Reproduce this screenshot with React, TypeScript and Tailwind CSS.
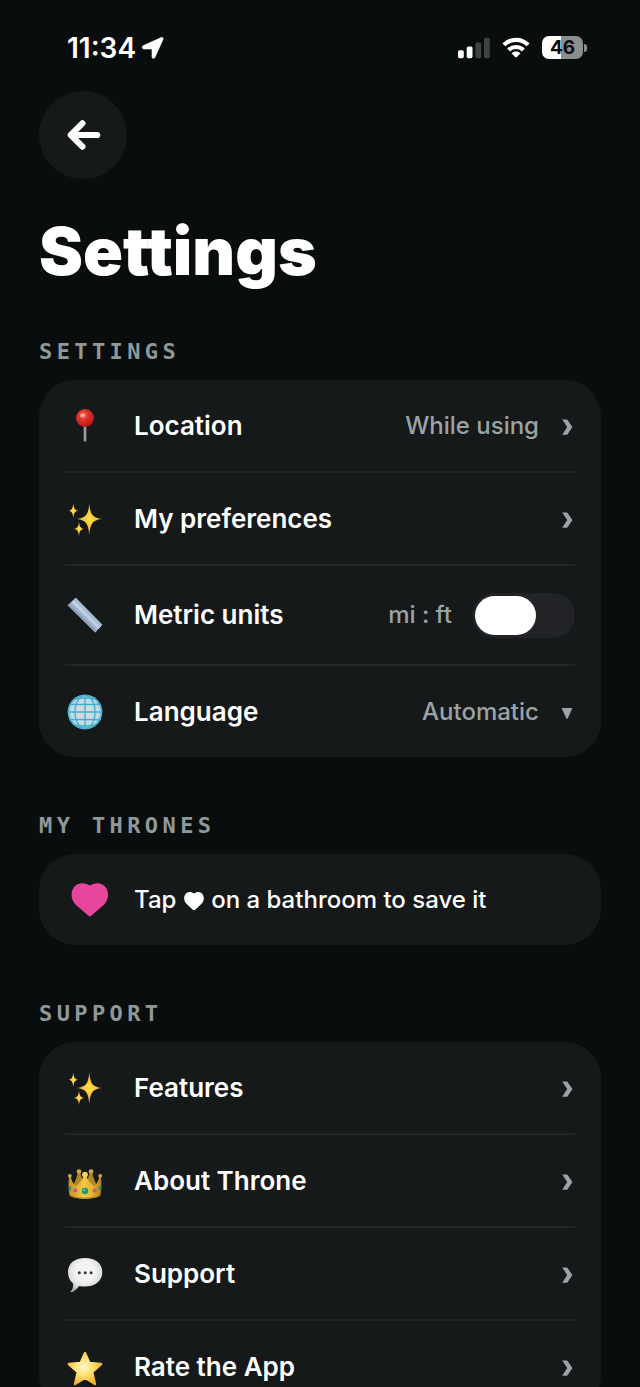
import { useState } from "react";
import type { ReactNode } from "react";

const PinIcon = () => (
  <svg viewBox="0 0 40 40" className="size-10 shrink-0" aria-hidden="true">
    <defs>
      <radialGradient id="pin-head" cx="0.4" cy="0.35" r="0.65">
        <stop offset="0" stopColor="#f58a80" />
        <stop offset="0.35" stopColor="#e2382f" />
        <stop offset="1" stopColor="#b9151b" />
      </radialGradient>
      <linearGradient id="pin-stick" x1="0" x2="1" y1="0" y2="0">
        <stop offset="0" stopColor="#6d6a6b" />
        <stop offset="0.5" stopColor="#bdb6b6" />
        <stop offset="1" stopColor="#6d6a6b" />
      </linearGradient>
    </defs>
    <rect x="18.5" y="18" width="3" height="17.5" rx="1.2" fill="url(#pin-stick)" />
    <circle cx="20" cy="12" r="9" fill="url(#pin-head)" />
    <ellipse cx="17.5" cy="9.5" rx="2.6" ry="2" fill="#fff" opacity="0.35" />
  </svg>
);

const SparklesIcon = () => (
  <svg viewBox="0 0 40 40" className="size-10 shrink-0" aria-hidden="true">
    <defs>
      <radialGradient id="sparkle">
        <stop offset="0" stopColor="#ffe04d" />
        <stop offset="0.5" stopColor="#fbc637" />
        <stop offset="1" stopColor="#d9952a" />
      </radialGradient>
    </defs>
    <g fill="url(#sparkle)">
      <path d="M24.3 4.2C25.4 15.6 27.2 18.6 36.8 20C27.2 21.4 25.4 24.4 24.3 35.8C23.2 24.4 21.4 21.4 11.8 20C21.4 18.6 23.2 15.6 24.3 4.2Z" />
      <path d="M8.3 4.3C8.9 9.6 9.6 11 13.3 11.8C9.6 12.6 8.9 14 8.3 19.3C7.7 14 7 12.6 3.3 11.8C7 11 7.7 9.6 8.3 4.3Z" />
      <path d="M14 22.6C14.6 27.8 15.3 29.2 19 30C15.3 30.8 14.6 32.2 14 37.2C13.4 32.2 12.7 30.8 9 30C12.7 29.2 13.4 27.8 14 22.6Z" />
    </g>
  </svg>
);

const RulerIcon = () => (
  <svg viewBox="0 0 40 40" className="size-10 shrink-0" aria-hidden="true">
    <path d="M10.7 2.8L37.3 29.8L30.3 37.5L2.7 10.2Z" fill="#9fb3cc" />
    <path d="M10.7 2.8L37.3 29.8L35.2 32.1L8.4 5.2Z" fill="#a9bcd6" />
    <path d="M8.4 5.2L35.2 32.1L33.4 34.1L6.4 7.1Z" fill="#c3d3e6" />
    <path d="M4.4 8.5L31.9 35.8L30.3 37.5L2.7 10.2Z" fill="#8fa2ba" />
  </svg>
);

const GlobeIcon = () => (
  <svg viewBox="0 0 40 40" className="size-10 shrink-0" aria-hidden="true">
    <defs>
      <radialGradient id="globe">
        <stop offset="0.3" stopColor="#d3dbe2" />
        <stop offset="0.8" stopColor="#c2dce6" />
        <stop offset="1" stopColor="#7cc8dc" />
      </radialGradient>
    </defs>
    <circle cx="20" cy="20" r="17.2" fill="url(#globe)" />
    <g fill="none" stroke="#46b0cc" strokeWidth="1.4">
      <circle cx="20" cy="20" r="16.6" />
      <path d="M20 3.5V36.5M3.5 20H36.5" />
      <ellipse cx="20" cy="20" rx="10" ry="16.5" />
      <path d="M4.6 12.2Q20 12.8 35.4 12.2M4.6 27.8Q20 27.2 35.4 27.8M9.5 7.3Q20 4.8 30.5 7.3M9.5 32.7Q20 35.2 30.5 32.7" />
    </g>
  </svg>
);

const HeartIcon = () => (
  <svg viewBox="0 0 44 40" className="h-10 w-11 shrink-0" aria-hidden="true">
    <path
      d="M24.8 36.4C24.2 36.4 23.4 35.8 22.6 35L10.4 24.4C7.8 21.6 6.6 18.4 6.6 14.8C6.6 8.2 11 3.2 17.2 3.2C20.4 3.2 22.8 4.4 24.8 5.6C26.8 4.4 29.2 3.2 32.4 3.2C38.6 3.2 43 8.2 43 14.8C43 18.4 41.8 21.6 39.2 24.4L27 35C26.2 35.8 25.4 36.4 24.8 36.4Z"
      fill="#e6479c"
    />
  </svg>
);

const CrownIcon = () => (
  <svg viewBox="0 0 40 40" className="size-10 shrink-0" aria-hidden="true">
    <defs>
      <linearGradient id="crown" x1="0" x2="1" y1="0" y2="0">
        <stop offset="0" stopColor="#c3901f" />
        <stop offset="0.45" stopColor="#f2cb45" />
        <stop offset="0.7" stopColor="#e5b636" />
        <stop offset="1" stopColor="#b27f1a" />
      </linearGradient>
    </defs>
    <path d="M7 27C9 22 12 17 13 11H15C16 15 18 19 20 22C22 19 24 15 25 11H27C28 17 31 22 33 27Z" fill="#b3862a" />
    <circle cx="14" cy="10.6" r="2.4" fill="#cfa53c" />
    <circle cx="26" cy="10.6" r="2.4" fill="#cfa53c" />
    <path
      d="M4.2 15.6H5.6C6.6 20 8.6 23.6 10.6 25C14.4 23 17.6 18.6 19 14H21C22.4 18.6 25.6 23 29.4 25C31.4 23.6 33.4 20 34.4 15.6H35.8C36.8 22 36.6 29 35.4 34.4C30 38.8 10 38.8 4.6 34.4C3.4 29 3.2 22 4.2 15.6Z"
      fill="url(#crown)"
    />
    <circle cx="20" cy="13.6" r="2.9" fill="#f4d45a" />
    <circle cx="4.8" cy="14.8" r="1.9" fill="#d9ab3a" />
    <circle cx="35.2" cy="14.8" r="1.9" fill="#d9ab3a" />
    <path d="M5.4 34.4C12 38 28 38 34.6 34.4" fill="none" stroke="#b58520" strokeWidth="1" />
    <circle cx="20" cy="30" r="3.2" fill="#189a72" />
    <circle cx="19.2" cy="29" r="1" fill="#6fd3b0" />
    <circle cx="10.3" cy="29.4" r="2" fill="#dd4f93" />
    <circle cx="29.7" cy="29.4" r="2" fill="#dd4f93" />
    <ellipse cx="4.9" cy="27.4" rx="1.3" ry="2.3" fill="#189a72" />
    <ellipse cx="35.1" cy="27.4" rx="1.3" ry="2.3" fill="#189a72" />
  </svg>
);

const BubbleIcon = () => (
  <svg viewBox="0 0 40 40" className="size-10 shrink-0" aria-hidden="true">
    <defs>
      <radialGradient id="bubble" cx="0.5" cy="0.4" r="0.62">
        <stop offset="0.45" stopColor="#f3f3f4" />
        <stop offset="0.8" stopColor="#dadbdc" />
        <stop offset="1" stopColor="#a9abad" />
      </radialGradient>
    </defs>
    <path
      d="M20 4C30.5 4 37.3 9.5 37.3 18.1C37.3 26.9 30.5 32.5 20 32.5C17.8 32.5 15.8 32.3 14 31.9C12.2 34.9 9 37.5 6.2 38.2C5.6 38.3 5.4 37.7 5.8 37.3C7.4 35.5 8.4 32.7 8.2 29.7C4.8 27.1 3 22.9 3 18.1C3 9.5 9.5 4 20 4Z"
      fill="url(#bubble)"
    />
    <g fill="#333537">
      <circle cx="14.3" cy="18.8" r="1.5" />
      <circle cx="20.2" cy="18.8" r="1.5" />
      <circle cx="26.1" cy="18.8" r="1.5" />
    </g>
  </svg>
);

const StarIcon = () => (
  <svg viewBox="0 0 40 40" className="size-10 shrink-0" aria-hidden="true">
    <defs>
      <radialGradient id="star" cx="0.45" cy="0.45" r="0.6">
        <stop offset="0" stopColor="#fff6cf" />
        <stop offset="0.5" stopColor="#fddf6d" />
        <stop offset="1" stopColor="#f4a92a" />
      </radialGradient>
    </defs>
    <path
      d="M20 6L24.4 16L36.2 17L27.2 25L30 37L20 30.8L10 37L12.8 25L3.8 17L15.6 16Z"
      fill="url(#star)"
      stroke="url(#star)"
      strokeWidth="2.4"
      strokeLinejoin="round"
    />
  </svg>
);

const Chevron = () => (
  <svg viewBox="0 0 16 24" className="h-6 w-4 shrink-0" aria-hidden="true">
    <path d="M3.2 5.4H7.6Q8.2 5.4 8.6 6L13.4 13.1L8.6 20.2Q8.2 20.8 7.6 20.8H3.2L8.2 13.1Z" fill="#9ba4a5" />
  </svg>
);

const StatusBar = () => (
  <header className="flex h-[91px] items-center justify-between pt-1 pl-7 pr-[14px]">
    <div className="flex items-center gap-1">
      <span className="text-[28px] leading-8 font-semibold">11:34</span>
      <svg viewBox="0 0 24 24" className="size-6" aria-hidden="true">
        <path
          d="M21.2 1.6C22.6 1 23.6 2 23 3.4L15 21.2C14.2 23 12 22.6 12 20.8V13.6C12 13.2 11.8 13 11.4 13H4C2 12.8 1.6 10.4 3.4 9.6Z"
          fill="#fff"
          stroke="#fff"
          strokeWidth="0.6"
        />
      </svg>
    </div>
    <div className="flex items-center gap-3">
      <svg viewBox="0 0 32 24" className="h-6 w-8" aria-hidden="true">
        <rect x="0" y="14.2" width="5.8" height="8" rx="1.6" fill="#fff" />
        <rect x="8.7" y="10.5" width="5.8" height="11.7" rx="1.6" fill="#fff" />
        <rect x="17.4" y="6.5" width="5.8" height="15.7" rx="1.6" fill="#404344" />
        <rect x="26" y="1.7" width="5.8" height="20.5" rx="1.6" fill="#404344" />
      </svg>
      <svg viewBox="0 0 28 24" className="h-6 w-7" aria-hidden="true">
        <g fill="none" stroke="#fff" strokeWidth="4.2">
          <path d="M1.9 8.9C8.6 2.1 19.4 2.1 26.1 8.9" />
          <path d="M6.6 14C10.7 10 17.3 10 21.4 14" />
        </g>
        <path d="M9.5 17.2C12 14.9 16 14.9 18.5 17.2L14.9 20.9Q14 21.8 13.1 20.9Z" fill="#fff" />
      </svg>
      <div className="flex items-center gap-px">
        <div className="flex h-[23px] w-[41px] items-center justify-center rounded-[7px] bg-linear-to-r from-white from-46% to-[#8b8d8e] to-46% text-[19px] leading-none font-bold text-[#090d0e]">
          46
        </div>
        <div className="h-2 w-[3px] rounded-r-full bg-[#8b8d8e]" />
      </div>
    </div>
  </header>
);

const Section = ({ title, children }: { title: string; children: ReactNode }) => (
  <section>
    <h2 className="mb-[14px] font-['DejaVu_Sans_Mono',monospace] text-[22px] leading-7 font-bold tracking-[0.2em] text-[#8f999a] uppercase">
      {title}
    </h2>
    <div className="divide-y-2 divide-[#222627] rounded-[36px] bg-[#15191a] px-[26px]">
      {children}
    </div>
  </section>
);

interface RowLinkProps {
  icon: ReactNode;
  label: string;
  value?: string;
}

const RowLink = ({ icon, label, value }: RowLinkProps) => (
  <a href="#" className="box-content flex h-[91px] items-center gap-[29px]">
    {icon}
    <span className="flex-1 text-[26px] leading-8 font-semibold">{label}</span>
    <span className="flex items-center gap-5">
      {value && (
        <span className="text-2xl leading-8 font-medium text-[#9ba4a5]">{value}</span>
      )}
      <Chevron />
    </span>
  </a>
);

export default function App() {
  const [metric, setMetric] = useState(false);

  return (
    <div className="h-screen overflow-hidden bg-[#090d0e] px-[39px] font-[Inter,sans-serif] text-white">
      <StatusBar />
      <main>
        <button
          type="button"
          aria-label="Back"
          className="block size-[88px] rounded-full bg-[#15191a]"
        >
          <svg viewBox="0 0 88 88" aria-hidden="true">
            <path
              d="M43.4 32.4L31.8 44L43.4 55.6M32.5 44H58.2"
              fill="none"
              stroke="#fff"
              strokeWidth="6.2"
              strokeLinecap="round"
              strokeLinejoin="round"
            />
          </svg>
        </button>
        <h1 className="mt-9 mb-[51px] text-[66px] leading-[72px] font-black">Settings</h1>

        <div className="flex flex-col gap-[55px]">
          <Section title="Settings">
            <RowLink icon={<PinIcon />} label="Location" value="While using" />
            <RowLink icon={<SparklesIcon />} label="My preferences" />
            <div className="box-content flex h-[98px] items-center gap-[29px]">
              <RulerIcon />
              <label htmlFor="metric" className="flex-1 text-[26px] leading-8 font-semibold">
                Metric units
              </label>
              <span className="flex items-center gap-5">
                <span className="text-2xl leading-8 font-medium text-[#9ba4a5]">mi : ft</span>
                <input
                  id="metric"
                  type="checkbox"
                  role="switch"
                  checked={metric}
                  onChange={(e) => setMetric(e.target.checked)}
                  className="flex h-[45px] w-[103px] appearance-none items-center rounded-full bg-[#222327] px-[3px] before:h-[39px] before:w-[61px] before:rounded-full before:bg-white before:transition-transform checked:bg-green-500 checked:before:translate-x-9"
                />
              </span>
            </div>
            <div className="box-content flex h-[91px] items-center gap-[29px]">
              <GlobeIcon />
              <label htmlFor="language" className="flex-1 text-[26px] leading-8 font-semibold">
                Language
              </label>
              <span className="flex items-center gap-5">
                <select
                  id="language"
                  className="h-8 appearance-none bg-transparent text-2xl leading-8 font-medium text-[#9ba4a5]"
                >
                  <option>Automatic</option>
                </select>
                <svg viewBox="0 0 16 24" className="h-6 w-4" aria-hidden="true">
                  <path d="M2.6 8H13.4L8.8 18.2Q8 19.6 7.2 18.2Z" fill="#9ba4a5" />
                </svg>
              </span>
            </div>
          </Section>

          <Section title="My Thrones">
            <div className="flex h-[91px] items-center gap-[25px]">
              <HeartIcon />
              <p className="text-2xl leading-8 font-medium">
                Tap{" "}
                <svg viewBox="0 0 22 20" className="inline h-5 w-[22px]" aria-hidden="true">
                  <path
                    d="M11 19.4Q10.4 19.4 9.6 18.6L3.4 12.8C1.9 11.2 1.2 9.4 1.2 7.2C1.2 3.8 3.6 1 6.6 1C8.4 1 9.8 1.6 11 2.5C12.2 1.6 13.6 1 15.4 1C18.4 1 20.8 3.8 20.8 7.2C20.8 9.4 20.1 11.2 18.6 12.8L12.4 18.6Q11.6 19.4 11 19.4Z"
                    fill="#fff"
                  />
                </svg>{" "}
                on a bathroom to save it
              </p>
            </div>
          </Section>

          <Section title="Support">
            <RowLink icon={<SparklesIcon />} label="Features" />
            <RowLink icon={<CrownIcon />} label="About Throne" />
            <RowLink icon={<BubbleIcon />} label="Support" />
            <RowLink icon={<StarIcon />} label="Rate the App" />
          </Section>
        </div>
      </main>
    </div>
  );
}
